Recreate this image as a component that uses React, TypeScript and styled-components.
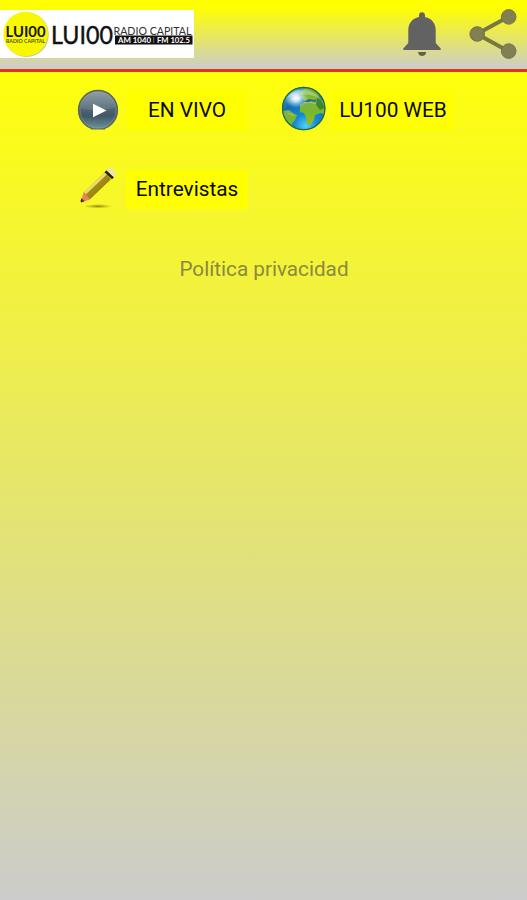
import React from "react";
import styled, { createGlobalStyle } from "styled-components";

const GlobalStyle = createGlobalStyle`
  * { box-sizing: border-box; }
  body { margin: 0; font-family: Roboto, "Liberation Sans", sans-serif; }
`;

const Screen = styled.div`
  display: flex;
  flex-direction: column;
  width: 100%;
  height: 100vh;
  overflow: hidden;
`;

const Header = styled.header`
  display: flex;
  flex: none;
  align-items: flex-start;
  justify-content: space-between;
  height: 72px;
  background: linear-gradient(#ffff00 0, #ffff00 10%, #cccccc 100%);
  border-bottom: 3px solid #e2331a;
`;

const Logo = styled.svg`
  display: block;
  width: 194px;
  height: 48px;
  margin-top: 10px;
`;

const Actions = styled.div`
  display: flex;
  gap: 28px;
  padding: 9px 10px 0 0;
`;

const IconButton = styled.button`
  display: block;
  padding: 0;
  border: 0;
  background: none;
  svg { display: block; }
`;

const Content = styled.main`
  flex: 1;
  padding: 14px 74px 0;
  background: linear-gradient(#ffff0c 0, #cccccc 100%);
`;

const Menu = styled.nav`
  display: grid;
  grid-template-columns: 173px 173px;
  grid-auto-rows: 48px;
  column-gap: 33px;
  row-gap: 31px;
`;

const MenuItem = styled.a`
  display: flex;
  align-items: center;
  gap: 4px;
  color: #0a0a00;
`;

const MenuIcon = styled.svg`
  flex: none;
  width: 48px;
  height: 48px;
`;

const Label = styled.span`
  flex: 1;
  height: 39px;
  padding-left: 1px;
  background: #ffff00;
  font-size: 20.8px;
  line-height: 39px;
  text-align: center;
  white-space: nowrap;
`;

const Privacy = styled.a`
  display: block;
  margin-top: 43px;
  padding-left: 1px;
  color: #8d8840;
  font-size: 20.7px;
  line-height: 26px;
  text-align: center;
`;

const RadioLogo = () => (
  <Logo viewBox="0 0 194 48" fontFamily="Lato, sans-serif" role="img">
    <rect width="194" height="48" fill="#fff" />
    <circle cx="26.4" cy="24.6" r="22.4" fill="#aaa95a" opacity=".65" />
    <circle cx="25.6" cy="24" r="22.3" fill="#f8f800" />
    <text x="5.5" y="27.2" fontSize="16" fontWeight="700" fill="#171703" textLength="40" lengthAdjust="spacingAndGlyphs">LUI00</text>
    <text x="6" y="32.7" fontSize="5.2" fontWeight="700" fill="#55550c" textLength="39" lengthAdjust="spacingAndGlyphs">RADIO CAPITAL</text>
    <text x="51" y="33.5" fontSize="24.5" fill="#111" stroke="#111" strokeWidth=".4" textLength="62" lengthAdjust="spacingAndGlyphs">LUI00</text>
    <text x="113.5" y="25" fontSize="12" fill="#333" textLength="78" lengthAdjust="spacingAndGlyphs">RADIO CAPITAL</text>
    <rect x="115" y="25.5" width="77.5" height="9" fill="#101010" />
    <text x="118" y="32.8" fontSize="7.5" fontWeight="700" fill="#fff" textLength="33" lengthAdjust="spacingAndGlyphs">AM 1040</text>
    <path d="M153.7 27v6" stroke="#999" strokeWidth=".7" />
    <text x="157" y="32.8" fontSize="7.5" fontWeight="700" fill="#fff" textLength="33" lengthAdjust="spacingAndGlyphs">FM 102.5</text>
  </Logo>
);

const BellIcon = () => (
  <svg width="38" height="50" viewBox="0 0 38 50">
    <path d="M19 3.2c-1.8 0-3 1.2-3 3v1.7C9 9.3 5.3 14.5 5.3 21v13L.3 39.5V41h37.4v-1.5L32.7 34V21c0-6.5-3.7-11.7-10.7-13.1V6.2c0-1.8-1.2-3-3-3Z" fill="#626262" />
    <path d="M15 43h8.2c-.3 2.5-1.9 4-4.1 4s-3.8-1.5-4.1-4Z" fill="#626244" />
  </svg>
);

const ShareIcon = () => (
  <svg width="48" height="50" viewBox="0 0 48 50">
    <path d="M39.5 7.7 8 25l31.5 17.3" fill="none" stroke="#787840" strokeWidth="4" />
    <g fill="#808053" stroke="#747448">
      <circle cx="8.2" cy="25" r="7.3" />
      <circle cx="39.7" cy="7.9" r="7.3" />
      <circle cx="39.7" cy="42.1" r="7.3" />
    </g>
  </svg>
);

const PlayIcon = () => (
  <MenuIcon viewBox="0 0 48 48">
    <defs>
      <linearGradient id="disc" x2="0" y2="1">
        <stop stopColor="#8b9ba1" />
        <stop offset=".4" stopColor="#586c78" />
        <stop offset=".65" stopColor="#405766" />
        <stop offset="1" stopColor="#6f979d" />
      </linearGradient>
      <clipPath id="disc-cut"><path d="M0 0h48v43H0z" /></clipPath>
    </defs>
    <g clipPath="url(#disc-cut)">
      <circle cx="24" cy="24" r="19.5" fill="url(#disc)" stroke="#56665b" strokeWidth="1.3" />
      <circle cx="24" cy="24" r="18" fill="none" stroke="#91a2a5" strokeWidth=".8" opacity=".6" />
      <path d="M7 22c8 3 24 3 34-1-1-9-8-15-17-15S7 12 7 22Z" fill="#a3b2b7" opacity=".22" />
    </g>
    <path d="M17 43h14" stroke="#657765" strokeWidth="1.1" />
    <path d="M19 17.7v13.6L32.5 24.5Z" fill="#fff" />
  </MenuIcon>
);

const GlobeIcon = () => (
  <MenuIcon viewBox="0 0 48 48">
    <defs>
      <radialGradient id="sea" cx=".55" cy=".9" r=".85">
        <stop stopColor="#50d4f5" />
        <stop offset=".3" stopColor="#168dd2" />
        <stop offset=".7" stopColor="#126bb2" />
        <stop offset="1" stopColor="#4095b9" />
      </radialGradient>
      <linearGradient id="land" x2="0" y2="1">
        <stop stopColor="#82ad57" />
        <stop offset=".55" stopColor="#78b82b" />
        <stop offset="1" stopColor="#9cba20" />
      </linearGradient>
      <radialGradient id="glow">
        <stop stopColor="#fff" />
        <stop offset=".3" stopColor="#e7f7ff" stopOpacity=".9" />
        <stop offset="1" stopColor="#a7dff5" stopOpacity="0" />
      </radialGradient>
      <clipPath id="sphere"><circle cx="23.7" cy="22.5" r="21.5" /></clipPath>
    </defs>
    <circle cx="23.7" cy="22.5" r="21.7" fill="url(#sea)" />
    <g clipPath="url(#sphere)">
      <g fill="url(#land)">
        <path d="M20 6 26 2l8 1 4 5 1 4-5 2-5-1-4 2-4-4Z" />
        <path d="m20 19 4-3 4 1 3-2 4 1 3-6 7 8v11l-4-2-3 1-3 1-1 5-4 5-3-1-1-7-2-4-4-1Z" />
        <path d="m2 25 7-1 4 3 4 2-2 5-3 3-1 5-6-5Z" />
      </g>
      <path d="m37 12 4 2 4 8-5 2-4-5Z" fill="#3b862f" />
      <path d="M24 17q7-2 12 1M8 27l6 3" stroke="#b8c956" fill="none" />
      <ellipse cx="16" cy="12" rx="12" ry="10" fill="url(#glow)" />
      <path d="M6 12Q23-5 40 12 25 5 6 12" fill="#fff" opacity=".3" />
    </g>
    <circle cx="23.7" cy="22.5" r="21.2" fill="none" stroke="#286642" strokeWidth="1.2" />
  </MenuIcon>
);

const PencilIcon = () => (
  <MenuIcon viewBox="0 0 48 48">
    <defs>
      <radialGradient id="shade">
        <stop stopColor="#746f00" stopOpacity=".85" />
        <stop offset="1" stopColor="#aaa800" stopOpacity="0" />
      </radialGradient>
      <linearGradient id="wood" x2="1" y2="1">
        <stop stopColor="#cebd2e" />
        <stop offset=".5" stopColor="#a38a12" />
        <stop offset="1" stopColor="#816d09" />
      </linearGradient>
    </defs>
    <ellipse cx="24" cy="41.3" rx="15" ry="2.3" fill="url(#shade)" />
    <g transform="translate(0 -1.7)">
      <path d="m10 29 21-20 6 7-21 20-8 2Z" fill="url(#wood)" />
      <path d="m10 29 21-20 2 2-21 20Z" fill="#e8dc73" />
      <path d="m10 29 6 7-8 3-1-2Z" fill="#ec8060" />
      <path d="m7.500 35 3 3-3.500 1.200-.5-1.700Z" fill="#3b301c" />
      <path d="m30.500 9 2-2 7.500 7-2 2Z" fill="#252514" />
      <path d="m32.500 7 3-2.500q5 0 6 6L40 14Z" fill="#eee5b5" />
    </g>
  </MenuIcon>
);

export default function App() {
  return (
    <>
      <GlobalStyle />
      <Screen>
        <Header>
          <RadioLogo />
          <Actions>
            <IconButton aria-label="Notificaciones"><BellIcon /></IconButton>
            <IconButton aria-label="Compartir"><ShareIcon /></IconButton>
          </Actions>
        </Header>
        <Content>
          <Menu>
            <MenuItem><PlayIcon /><Label>EN VIVO</Label></MenuItem>
            <MenuItem><GlobeIcon /><Label>LU100 WEB</Label></MenuItem>
            <MenuItem><PencilIcon /><Label>Entrevistas</Label></MenuItem>
          </Menu>
          <Privacy>Política privacidad</Privacy>
        </Content>
      </Screen>
    </>
  );
}
